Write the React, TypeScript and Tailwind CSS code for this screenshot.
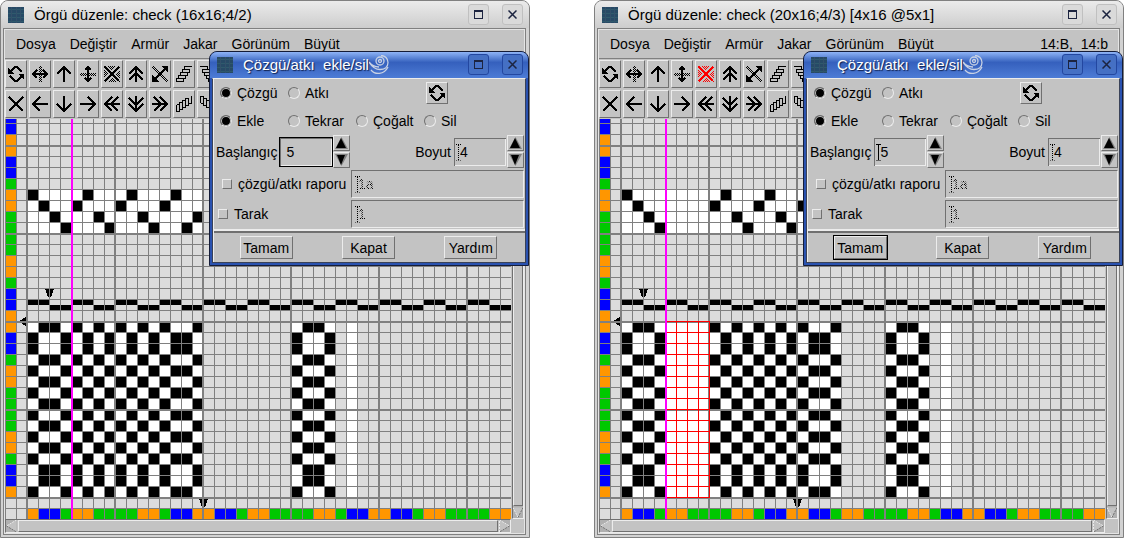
import { useState } from "react";
import type { ReactNode } from "react";

const PITCH = 11;
const CANVAS_W = 506;
const CANVAS_H = 400;
const COLS = 44;
const ROWS = 35;

// 16 thread colour repeat, used by both warp and weft
const COLOUR_REPEAT = "OBBGOOGGGGOOGBBO";
const COLOURS: Record<string, string> = { O: "#ff9600", B: "#0000ff", G: "#00c800" };

// weave rows, bottom to top; A and B are complements
const WEAVE_ROWS = [..."BAABABABABABABBA"];
const ROW_A = [1, 2, 4, 6, 8, 10, 12, 15];
const THREADING = [0, 1, 2, 3, 1, 0, 2, 3, 1, 0, 2, 3, 1, 0, 3, 2];

const colX = (c: number) => 22 + PITCH * c;
const rowY = (r: number) => 378 - PITCH * r;

type Draft = {
  title: string;
  status?: string;
  inserted: number; // blank ends added after the 4th end
  marked: boolean;
};

const DRAFTS: Draft[] = [
  { title: "Örgü düzenle: check (16x16;4/2)", inserted: 0, marked: false },
  {
    title: "Örgü düzenle: check (20x16;4/3) [4x16 @5x1]",
    status: "14:B,  14:b",
    inserted: 4,
    marked: true,
  },
];

function Cell({ c, r, fill }: { c: number; r: number; fill: string }) {
  return <rect x={colX(c)} y={rowY(r + 1)} width={PITCH} height={PITCH} fill={fill} />;
}

function WeaveCanvas({ inserted }: { inserted: number }) {
  const ends = Array.from({ length: 16 }, (_, i) => ({ src: i, col: i < 4 ? i : i + inserted }));
  const copy = [0, 1, 2, 3].map((i) => ({ src: i, col: 24 + i }));
  const width = 16 + inserted;

  return (
    <svg
      width={CANVAS_W}
      height={CANVAS_H}
      viewBox={`0 0 ${CANVAS_W} ${CANVAS_H}`}
      shapeRendering="crispEdges"
      className="block shrink-0"
    >
      <rect width={CANVAS_W} height={CANVAS_H} fill="#dcdcdc" />

      {/* thread colours */}
      {Array.from({ length: ROWS }, (_, r) => (
        <rect key={r} x={0} y={rowY(r + 1)} width={11} height={11} fill={COLOURS[COLOUR_REPEAT[r % 16]]} />
      ))}
      {Array.from({ length: COLS }, (_, c) => (
        <rect key={c} x={colX(c)} y={390} width={11} height={10} fill={COLOURS[COLOUR_REPEAT[c % 16]]} />
      ))}

      {/* threading */}
      <rect x={colX(0)} y={rowY(28)} width={PITCH * width} height={PITCH * 4} fill="#fff" />
      {ends.map((e) => (
        <Cell key={e.src} c={e.col} r={27 - THREADING[e.src]} fill="#000" />
      ))}

      {/* reed */}
      {Array.from({ length: COLS }, (_, c) => (
        <rect key={c} x={colX(c)} y={c % 4 < 2 ? 181 : 186} width={11} height={5} />
      ))}

      {/* fabric */}
      <rect x={colX(0)} y={rowY(16)} width={PITCH * width} height={PITCH * 16} fill="#fff" />
      <rect x={colX(24)} y={rowY(16)} width={PITCH * 4} height={PITCH * 16} fill="#fff" />
      <rect x={colX(29)} y={rowY(16)} width={PITCH} height={PITCH * 16} fill="#fff" />
      {WEAVE_ROWS.map((kind, r) =>
        [...ends, ...copy]
          .filter((e) => ROW_A.includes(e.src) === (kind === "A"))
          .map((e) => <Cell key={`${r}-${e.col}`} c={e.col} r={r} fill="#000" />),
      )}

      {/* markers */}
      <path d="M40 170h9l-3 8h-3z" />
      <path d="M194 380h9l-3 8h-3z" />
      <path d="M14 202l7-4v9l-2-1z" />

      {/* grid */}
      {Array.from({ length: 46 }, (_, k) => {
        const thick = k % 8 === 2;
        return (
          <rect key={k} x={PITCH * k - (thick ? 1 : 0)} y={0} width={thick ? 2 : 1} height={CANVAS_H} fill="#808080" />
        );
      })}
      {Array.from({ length: 36 }, (_, i) => (
        <rect key={i} x={0} y={rowY(i - 1)} width={CANVAS_W} height={(i - 1) % 8 === 0 ? 2 : 1} fill="#808080" />
      ))}

      {/* newly inserted ends */}
      {inserted > 0 && (
        <g fill="#f00">
          {Array.from({ length: inserted }, (_, i) => (
            <rect key={i} x={colX(5 + i)} y={rowY(16)} width={1} height={PITCH * 16 + 1} />
          ))}
          {Array.from({ length: 17 }, (_, r) => (
            <rect key={r} x={colX(4)} y={rowY(r)} width={PITCH * inserted + 1} height={1} />
          ))}
        </g>
      )}

      <rect x={66} y={0} width={2} height={CANVAS_H} fill="#f0f" />
    </svg>
  );
}

function Glyph({ children, stroke = "#000", width = 2.4 }: { children: ReactNode; stroke?: string; width?: number }) {
  return (
    <svg width="18" height="18" viewBox="0 0 18 18" fill="none" stroke={stroke} strokeWidth={width} shapeRendering="crispEdges">
      {children}
    </svg>
  );
}

// checkerboard of single pixels
function dither(x: number, y: number, w: number, h: number) {
  let d = "";
  for (let j = y; j < y + h; j++) {
    for (let i = x; i < x + w; i++) {
      if ((i + j) % 2 === 0) d += `M${i} ${j}h1v1h-1z`;
    }
  }
  return d;
}

const RotateGlyph = () => (
  <Glyph>
    <path d="M4 6l4-4h2l5 5M3 11l5 5h2l4-4" />
    <path d="M1 3v6h6zM17 15V9h-6z" fill="#000" stroke="none" />
  </Glyph>
);

function CrossGlyph({ colour }: { colour: string }) {
  return (
    <Glyph stroke={colour}>
      <path d={dither(1, 1, 16, 16)} fill={colour} stroke="none" />
      <path d="M2 2l14 14M16 2L2 16" stroke="#c3c3c3" strokeWidth={4.5} />
      <path d="M2 2l14 14M16 2L2 16" strokeWidth={2} />
    </Glyph>
  );
}

function StairsGlyph({ transform }: { transform?: string }) {
  return (
    <Glyph width={1}>
      <g transform={transform}>
        <path d="M17 1.5H9.5v3H15M13 4.5H7.5v3H13M11 7.5H5.5v3H11M9 10.5H3.5v3H9M7 13.5H1.5v3H8M8.5 14v2.5M10.5 11v2.5H9M12.5 8v2.5H11M14.5 5v2.5H13" />
      </g>
    </Glyph>
  );
}

function toolRows(marked: boolean): { name: string; icon: ReactNode }[][] {
  return [
    [
      { name: "Döndür", icon: <RotateGlyph /> },
      {
        name: "Yatay ayna",
        icon: (
          <Glyph>
            <path d="M2 9h14M6 5L2 9l4 4M12 5l4 4-4 4" />
            <path d={dither(8, 1, 3, 16)} fill="#000" stroke="none" />
          </Glyph>
        ),
      },
      { name: "Yukarı", icon: <Glyph><path d="M9 17V2M2 9l7-7 7 7" /></Glyph> },
      {
        name: "Dikey ayna",
        icon: (
          <Glyph>
            <path d="M9 2v14M6 5l3-3 3 3M6 13l3 3 3-3" />
            <path d={dither(1, 8, 16, 3)} fill="#000" stroke="none" />
          </Glyph>
        ),
      },
      { name: "Temizle", icon: <CrossGlyph colour={marked ? "#f00" : "#000"} /> },
      { name: "Hızlı yukarı", icon: <Glyph><path d="M9 17V2M2 9l7-7 7 7M2 15l7-7 7 7" /></Glyph> },
      {
        name: "Çapraz",
        icon: (
          <Glyph>
            <path d="M3 15L15 3" />
            <path d="M17 1v7l-7-7zM1 17v-7l7 7z" fill="#000" stroke="none" />
            <path d="M1 2l15 15M2 1l15 15" strokeWidth={1} />
          </Glyph>
        ),
      },
      { name: "Basamak sağa", icon: <StairsGlyph /> },
      { name: "Basamak sola", icon: <StairsGlyph transform="translate(18 0) scale(-1 1)" /> },
    ],
    [
      { name: "Sil", icon: <Glyph><path d="M2 2l14 14M16 2L2 16" /></Glyph> },
      { name: "Sola", icon: <Glyph><path d="M17 9H2M9 2L2 9l7 7" /></Glyph> },
      { name: "Aşağı", icon: <Glyph><path d="M9 1v15M2 9l7 7 7-7" /></Glyph> },
      { name: "Sağa", icon: <Glyph><path d="M1 9h15M9 2l7 7-7 7" /></Glyph> },
      { name: "Hızlı sola", icon: <Glyph><path d="M17 9H2M9 2L2 9l7 7M15 2L8 9l7 7" /></Glyph> },
      { name: "Hızlı aşağı", icon: <Glyph><path d="M9 1v15M2 9l7 7 7-7M2 3l7 7 7-7" /></Glyph> },
      { name: "Hızlı sağa", icon: <Glyph><path d="M1 9h15M9 2l7 7-7 7M3 2l7 7-7 7" /></Glyph> },
      { name: "Basamak yukarı", icon: <StairsGlyph transform="matrix(0 -1 -1 0 18 18)" /> },
      { name: "Basamak aşağı", icon: <StairsGlyph transform="matrix(0 1 -1 0 18 0)" /> },
    ],
  ];
}

const RAISED = "border border-t-[#ececec] border-l-[#ececec] border-r-[#707070] border-b-[#707070] bg-[#c3c3c3]";
const SUNKEN = "border border-t-[#707070] border-l-[#707070] border-r-[#ececec] border-b-[#ececec]";

const WindowIcon = () => (
  <svg width="16" height="16" viewBox="0 0 16 16" shapeRendering="crispEdges" className="shrink-0">
    <rect width="16" height="16" fill="#274a66" />
    <path d="M0 2.5h16M0 6.5h16M0 10.5h16M0 14.5h16" stroke="#2f5a6c" />
    <path d="M3.5 0v16M8.5 0v16M12.5 0v16" stroke="#33506a" />
  </svg>
);

function TitleButtons({ className }: { className: string }) {
  return (
    <div className="ml-auto flex shrink-0 gap-[13px]">
      <button aria-label="Büyüt" className={`grid size-[21px] place-items-center rounded-[3px] border ${className}`}>
        <svg width="9" height="9" viewBox="0 0 9 9" fill="none" stroke="#1c2440" shapeRendering="crispEdges">
          <path d="M.5 1.5h8v7h-8zM0 .5h9" />
        </svg>
      </button>
      <button aria-label="Kapat" className={`grid size-[21px] place-items-center rounded-[3px] border ${className}`}>
        <svg width="9" height="9" viewBox="0 0 9 9" fill="none" stroke="#1c2440" strokeWidth="1.5">
          <path d="M.5.5l8 8M8.5.5l-8 8" />
        </svg>
      </button>
    </div>
  );
}

function Radio({ name, label, checked }: { name: string; label: string; checked?: boolean }) {
  return (
    <label className="flex w-[68px] items-center gap-[5px]">
      <input
        type="radio"
        name={name}
        defaultChecked={checked}
        className="size-3 shrink-0 appearance-none rounded-full border border-t-[#707070] border-l-[#707070] border-r-[#ececec] border-b-[#ececec] checked:bg-black checked:shadow-[inset_0_0_0_1px_#c3c3c3]"
      />
      {label}
    </label>
  );
}

function Caret({ dotted = true }: { dotted?: boolean }) {
  return (
    <svg
      width="5"
      height="17"
      viewBox="0 0 5 17"
      fill="none"
      stroke="#000"
      strokeDasharray={dotted ? "1 1" : undefined}
      shapeRendering="crispEdges"
      className="pointer-events-none absolute top-1/2 left-[3px] -translate-y-1/2"
    >
      <path d="M0 .5h5M2.5 1v15M0 16.5h5" />
    </svg>
  );
}

function NumberField({ id, label, initial, caret }: { id: string; label: string; initial: number; caret?: "solid" | "dotted" }) {
  const [value, setValue] = useState(initial);
  return (
    <div className="flex items-center">
      <label htmlFor={id} className="pr-[2px]">{label}</label>
      <div className="relative">
        <input
          id={id}
          value={value}
          onChange={(e) => setValue(Number(e.target.value) || 0)}
          className={`block h-[30px] w-[54px] border pl-[6px] shadow-[inset_1px_1px_0_#707070,inset_-1px_-1px_0_#ececec] outline-none ${
            caret ? "border-transparent" : "border-black"
          }`}
        />
        {caret && <Caret dotted={caret === "dotted"} />}
      </div>
      <div className="flex flex-col gap-px">
        <button aria-label={`${label} artır`} onClick={() => setValue(value + 1)} className={`grid h-4 w-[17px] place-items-center ${RAISED}`}>
          <svg width="13" height="12" viewBox="0 0 13 12">
            <path d="M6.5 0L13 12H0z" fill="#808080" />
            <path d="M6 1l5 10H1z" />
          </svg>
        </button>
        <button aria-label={`${label} azalt`} onClick={() => setValue(value - 1)} className={`grid h-4 w-[17px] place-items-center ${RAISED}`}>
          <svg width="13" height="12" viewBox="0 0 13 12">
            <path d="M6.5 12L13 0H0z" fill="#808080" />
            <path d="M6 11l4-10H2z" />
          </svg>
        </button>
      </div>
    </div>
  );
}

function ReportField({ id, label, value, indent }: { id: string; label: string; value: string; indent: string }) {
  return (
    <div className="mt-[2px] flex h-7 items-center pr-px">
      <label className={`flex w-[137px] shrink-0 items-center gap-[6px] whitespace-nowrap ${indent}`}>
        <input type="checkbox" className={`size-[10px] shrink-0 appearance-none ${RAISED}`} />
        {label}
      </label>
      <div className={`relative h-full flex-1 ${SUNKEN}`}>
        <input
          id={id}
          aria-label={label}
          defaultValue={value}
          className="block h-full w-full bg-[repeating-conic-gradient(#000_0_25%,#c3c3c3_0_50%)] bg-[length:2px_2px] bg-clip-text pl-[6px] text-transparent outline-none"
        />
        <Caret />
      </div>
    </div>
  );
}

function InsertDialog({ id, applied }: { id: string; applied: boolean }) {
  return (
    <section className="absolute top-[50px] left-[208px] w-[320px] rounded-t-lg border border-[#141c38] bg-[#2a52b0] text-black">
      <header className="flex h-[26px] items-center rounded-t-[7px] bg-linear-to-b from-[#8fb4f6] via-[#3560bd] via-40% to-[#4d7cd6] pr-[5px] pb-px pl-[7px] text-[15px] text-white">
        <WindowIcon />
        <h2 className="pl-[10px] leading-5 whitespace-pre [text-shadow:1px_1px_1px_#10204c]">Çözgü/atkı  ekle/sil</h2>
        <svg width="20" height="20" viewBox="0 0 20 20" fill="none" stroke="#c9d2e4" strokeWidth="1.3">
          <circle cx="11" cy="6" r="1.5" />
          <circle cx="11" cy="6" r="4" />
          <path d="M12 .5c4 0 7 3 7 7 0 5-4 7-8 7S3 12 0 7c3 4 7 5 10 5" />
          <path d="M2 15c4 5 13 5 17-3" />
        </svg>
        <TitleButtons className="border-[#2347a0] bg-[#4570c4]" />
      </header>

      <div className="mx-[2px] mb-[2px] border border-t-[#ececec] border-r-[#3a4258] border-b-[#3a4258] border-l-[#3a4258] bg-[#c3c3c3]">
        <div className="border-l border-[#ececec] pt-[3px]">
          <div className="flex h-[22px] items-center pl-[6px]">
            <Radio name={`${id}-thread`} label="Çözgü" checked />
            <Radio name={`${id}-thread`} label="Atkı" />
            <button aria-label="Döndür" className={`mr-[77px] ml-auto grid size-[22px] place-items-center ${RAISED}`}>
              <RotateGlyph />
            </button>
          </div>
          <div className="flex h-[31px] items-center pt-[2px] pl-[6px]">
            <Radio name={`${id}-op`} label="Ekle" checked />
            <Radio name={`${id}-op`} label="Tekrar" />
            <Radio name={`${id}-op`} label="Çoğalt" />
            <Radio name={`${id}-op`} label="Sil" />
          </div>
          <div className="flex items-center justify-between pr-px pl-[2px]">
            <NumberField id={`${id}-start`} label="Başlangıç" initial={5} caret={applied ? "solid" : undefined} />
            <NumberField id={`${id}-size`} label="Boyut" initial={4} caret="dotted" />
          </div>
          <ReportField id={`${id}-report`} label="çözgü/atkı raporu" value="1a" indent="pl-[8px]" />
          <ReportField id={`${id}-reed`} label="Tarak" value="1" indent="pl-[4px]" />
          <div className="mt-px h-1 border-t-2 border-b-2 border-t-[#ececec] border-b-[#707070]" />
          <div className="grid grid-cols-3 justify-items-center py-[3px] pr-[3px] pl-px">
            {["Tamam", "Kapat", "Yardım"].map((text, i) => (
              <button
                key={text}
                className={`h-[23px] w-[53px] ${RAISED} ${applied && i === 0 ? "outline outline-black" : ""}`}
              >
                {text}
              </button>
            ))}
          </div>
        </div>
      </div>
    </section>
  );
}

function DraftWindow({ draft, id }: { draft: Draft; id: string }) {
  return (
    <main className="relative min-w-0 flex-1 rounded-t-lg border border-[#808080] bg-[#d2d2d2]">
      <header className="flex h-[27px] items-center rounded-t-[7px] bg-linear-to-b from-[#ebebeb] to-[#cdcdcd] pr-[6px] pl-[7px] text-[15px]">
        <WindowIcon />
        <h1 className="truncate pl-[10px] leading-6">{draft.title}</h1>
        <TitleButtons className="border-[#c0c0c0] bg-[#dadada]" />
      </header>

      <div className="mr-[3px] mb-[2px] ml-[2px] border border-[#808080]">
        <div className="border border-[#e4e4e4] bg-[#c3c3c3]">
          <nav className="flex h-[29px] items-center gap-[14px] border-b border-[#808080] pr-[10px] pl-[11px]">
            {["Dosya", "Değiştir", "Armür", "Jakar", "Görünüm", "Büyüt"].map((item) => (
              <button key={item}>{item}</button>
            ))}
            {draft.status && <span className="ml-auto whitespace-pre">{draft.status}</span>}
          </nav>

          <div className="flex flex-col gap-[2px] py-px">
            {toolRows(draft.marked).map((row, i) => (
              <div key={i} className="flex gap-[2px]">
                {row.map((tool) => (
                  <button key={tool.name} aria-label={tool.name} className={`grid h-7 w-[22px] place-items-center ${RAISED}`}>
                    {tool.icon}
                  </button>
                ))}
              </div>
            ))}
          </div>

          <div className="flex">
            <div className="min-w-0 flex-1 overflow-hidden bg-[#dcdcdc]">
              <WeaveCanvas inserted={draft.inserted} />
            </div>
            <div className={`ml-px flex w-3 shrink-0 flex-col ${SUNKEN}`}>
              <div className={`flex-1 ${RAISED}`} />
              <button aria-label="Aşağı kaydır" className="h-3 bg-[#b0b0b0]">
                <svg width="10" height="11" viewBox="0 0 10 11" fill="#c3c3c3">
                  <path d="M0 .5h10L5 10.5z" />
                  <path d="M0 .5l5 10" stroke="#ececec" strokeDasharray="2 1" />
                  <path d="M5 10.5l5-10" stroke="#707070" strokeDasharray="2 1" />
                </svg>
              </button>
            </div>
          </div>

          <div className="flex">
            <div className={`flex h-[14px] flex-1 ${SUNKEN}`}>
              <button aria-label="Sola kaydır" className="w-[11px] bg-[#b0b0b0]">
                <svg width="11" height="12" viewBox="0 0 11 12" fill="#c3c3c3">
                  <path d="M10.5 0v12L.5 6z" />
                  <path d="M10.5 0L.5 6" stroke="#ececec" strokeDasharray="2 1" />
                  <path d="M.5 6l10 6" stroke="#707070" strokeDasharray="2 1" />
                </svg>
              </button>
              <div className={`mx-px flex-1 ${RAISED}`} />
              <button aria-label="Sağa kaydır" className="w-[11px] bg-[#b0b0b0]">
                <svg width="11" height="12" viewBox="0 0 11 12" fill="#c3c3c3">
                  <path d="M.5 0v12l10-6z" />
                  <path d="M.5 12V0l10 6" fill="none" stroke="#ececec" strokeDasharray="2 1" />
                  <path d="M10.5 6l-10 6" stroke="#707070" strokeDasharray="2 1" />
                </svg>
              </button>
            </div>
            <div className="w-[13px] shrink-0" />
          </div>
        </div>
      </div>

      <InsertDialog id={id} applied={draft.inserted > 0} />
    </main>
  );
}

export default function App() {
  return (
    <div className="flex items-start gap-16 bg-white font-['Liberation_Sans',Arial,sans-serif] text-[14px] leading-none text-black">
      {DRAFTS.map((draft, i) => (
        <DraftWindow key={draft.title} draft={draft} id={`draft-${i}`} />
      ))}
    </div>
  );
}
